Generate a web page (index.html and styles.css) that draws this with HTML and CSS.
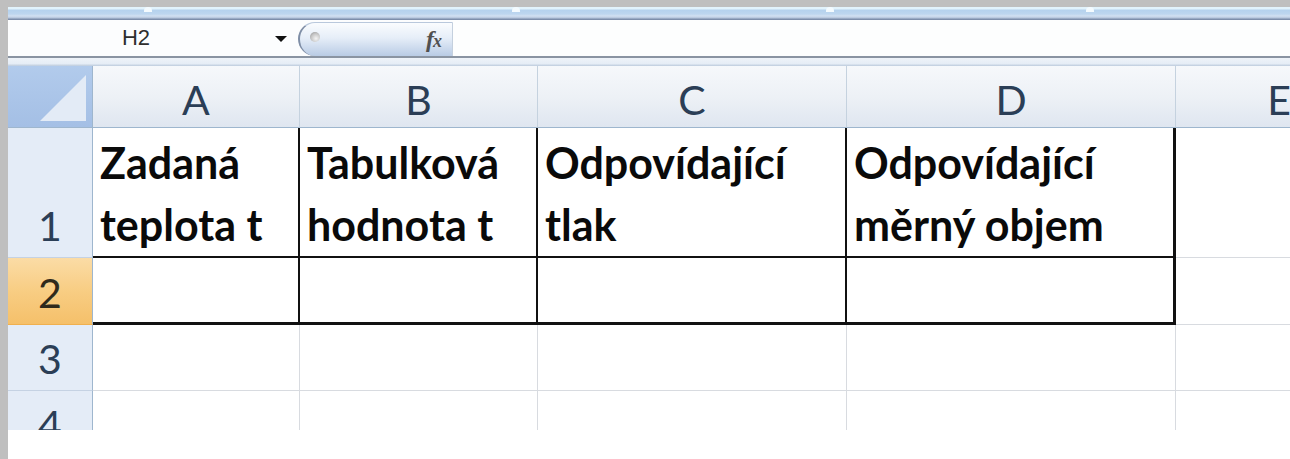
FILE: index.html
```html
<!DOCTYPE html>
<html lang="cs">
<head>
<meta charset="utf-8">
<title>Sešit1</title>
<link rel="stylesheet" href="styles.css">
</head>
<body>
<div class="window">
  <div class="ribbon-edge">
    <div class="group g1"></div><span class="tick"></span>
    <div class="group g2"></div><span class="tick"></span>
    <div class="group g3"></div><span class="tick"></span>
    <div class="group g4"></div><span class="tick"></span>
    <div class="group rest"></div>
  </div>

  <div class="formula-bar">
    <div class="name-box">
      <span class="cell-ref">H2</span>
      <span class="dropdown"></span>
    </div>
    <div class="fx-button">
      <span class="knob"></span>
      <span class="fx">f<span class="fx-x">x</span></span>
    </div>
    <div class="formula-input"></div>
  </div>
  <div class="bar-split"></div>

  <div class="sheet-view">
    <div class="sheet">
      <div class="corner">
        <svg class="corner-mark" width="50" height="50" viewBox="0 0 50 50"><polygon points="48,2 48,48 2,48" fill="#e3ebf6"/></svg>
      </div>
      <div class="col-head">A</div>
      <div class="col-head">B</div>
      <div class="col-head">C</div>
      <div class="col-head">D</div>
      <div class="col-head">E</div>

      <div class="row-head">1</div>
      <div class="cell boxed">Zadaná<br>teplota t</div>
      <div class="cell boxed">Tabulková<br>hodnota t</div>
      <div class="cell boxed">Odpovídající<br>tlak</div>
      <div class="cell boxed last">Odpovídající<br>měrný objem</div>
      <div class="cell"></div>

      <div class="row-head active">2</div>
      <div class="cell boxed bottom"></div>
      <div class="cell boxed bottom"></div>
      <div class="cell boxed bottom"></div>
      <div class="cell boxed bottom last"></div>
      <div class="cell"></div>

      <div class="row-head">3</div>
      <div class="cell"></div>
      <div class="cell"></div>
      <div class="cell"></div>
      <div class="cell"></div>
      <div class="cell"></div>

      <div class="row-head">4</div>
      <div class="cell"></div>
      <div class="cell"></div>
      <div class="cell"></div>
      <div class="cell"></div>
      <div class="cell"></div>
    </div>
  </div>
</div>
</body>
</html>
```

FILE: styles.css
```css
* { box-sizing: border-box; }

html, body {
  margin: 0;
  height: 100%;
}

body {
  background: #bfbfbf;
  padding: 7px 0 0 8px;
  overflow: hidden;
  font-family: "Lato", "Liberation Sans", sans-serif;
}

.window {
  background: #ffffff;
  height: 100%;
  display: flex;
  flex-direction: column;
}

/* bottom edge of the ribbon */
.ribbon-edge {
  height: 13px;
  display: flex;
  background: linear-gradient(#e2f3fc 0, #e2f3fc 2px, #b5d2ee 3px, #bdd6ef 7px, #d2e1f2 9px, #b3c4db 11px, #8091ae 12px, #7b8ca8 13px);
}
.group { height: 100%; }
.g1 { width: 136px; }
.g2 { width: 360px; }
.g3 { width: 306px; }
.g4 { width: 252px; }
.rest { flex: 1; }
.tick {
  width: 8px;
  height: 5px;
  background: #f4fbff;
  border-radius: 4px 4px 0 0;
  flex: none;
}

/* name box + formula line */
.formula-bar {
  height: 38px;
  display: flex;
  background: #fcfdfe;
  border-bottom: 2px solid #8a94a2;
}
.name-box {
  width: 290px;
  display: flex;
  align-items: center;
}
.cell-ref {
  width: 256px;
  text-align: center;
  font-size: 22px;
  color: #2e2e2e;
  font-family: "Liberation Sans", "Lato", sans-serif;
}
.dropdown {
  width: 0;
  height: 0;
  margin-left: 11px;
  margin-top: 2px;
  border-left: 6px solid transparent;
  border-right: 6px solid transparent;
  border-top: 6px solid #111;
}
.fx-button {
  width: 155px;
  margin-top: 2px;
  display: flex;
  align-items: center;
  justify-content: space-between;
  padding: 0 11px 0 10px;
  border-radius: 18px 0 0 18px;
  border-left: 2px solid #7f8ea6;
  border-top: 1px solid #b9c8dc;
  border-right: 1px solid #c4d0de;
  background: linear-gradient(#fafcfe, #e6eef8 45%, #c9d8ec 80%, #b9cbe4);
}
.knob {
  width: 10px;
  height: 10px;
  margin-top: -6px;
  border-radius: 50%;
  background: radial-gradient(circle at 60% 65%, #f4f4f4 0, #c4c4c4 55%, #8a8a8a 100%);
}
.fx {
  font-family: "Liberation Serif", serif;
  font-style: italic;
  font-weight: 700;
  font-size: 24px;
  color: #505050;
  letter-spacing: -1px;
}
.fx-x {
  font-size: 18px;
}
.formula-input {
  flex: 1;
  background: #fdfefe;
}

.bar-split {
  height: 8px;
  background: linear-gradient(#eef3f9, #e6edf6 70%, #bccbdd);
}

/* worksheet grid; the window shows only the top of row 4 */
.sheet-view {
  height: 364px;
  overflow: hidden;
  flex: none;
}
.sheet {
  display: grid;
  grid-template-columns: 85px 207px 238px 309px 329px 207px;
  grid-template-rows: 62px 130px 67px 66px 66px;
  font-size: 43px;
  line-height: 62px;
}

.corner {
  background: linear-gradient(#b2cbec, #a4bfe5);
  border-right: 1px solid #9eb6ce;
  border-bottom: 1px solid #9eb6ce;
  display: flex;
  justify-content: flex-end;
  align-items: flex-end;
  padding: 0 4px 4px 0;
}
.corner-mark { display: block; }

.col-head {
  background: linear-gradient(#f6f8fb, #edf1f6 50%, #dfe6f0);
  border-right: 1px solid #c5d2df;
  border-bottom: 1px solid #9eb6ce;
  color: #2b3e56;
  font-size: 41px;
  line-height: 52px;
  display: flex;
  align-items: flex-end;
  justify-content: center;
  padding-bottom: 1px;
}

.row-head {
  background: #e4ecf7;
  border-right: 1px solid #9eb6ce;
  border-bottom: 1px solid #c5d2e3;
  color: #2b3e56;
  font-size: 41px;
  display: flex;
  align-items: flex-end;
  justify-content: center;
}
.row-head.active {
  background: linear-gradient(#fbdca6, #f8cd83 50%, #f5c06a);
  border-bottom: 1px solid #f0b04f;
  color: #2f2a1c;
}

.cell {
  border-right: 1px solid #d8dbe0;
  border-bottom: 1px solid #d8dbe0;
  font-weight: 700;
  color: #0a0a0a;
  padding-left: 7px;
  display: flex;
  align-items: flex-end;
  white-space: nowrap;
}
.cell.boxed {
  border-right: 2px solid #111;
  border-bottom: 2px solid #111;
}
.cell.boxed.last { border-right-width: 3px; }
.cell.boxed.bottom { border-bottom-width: 3px; }
```
